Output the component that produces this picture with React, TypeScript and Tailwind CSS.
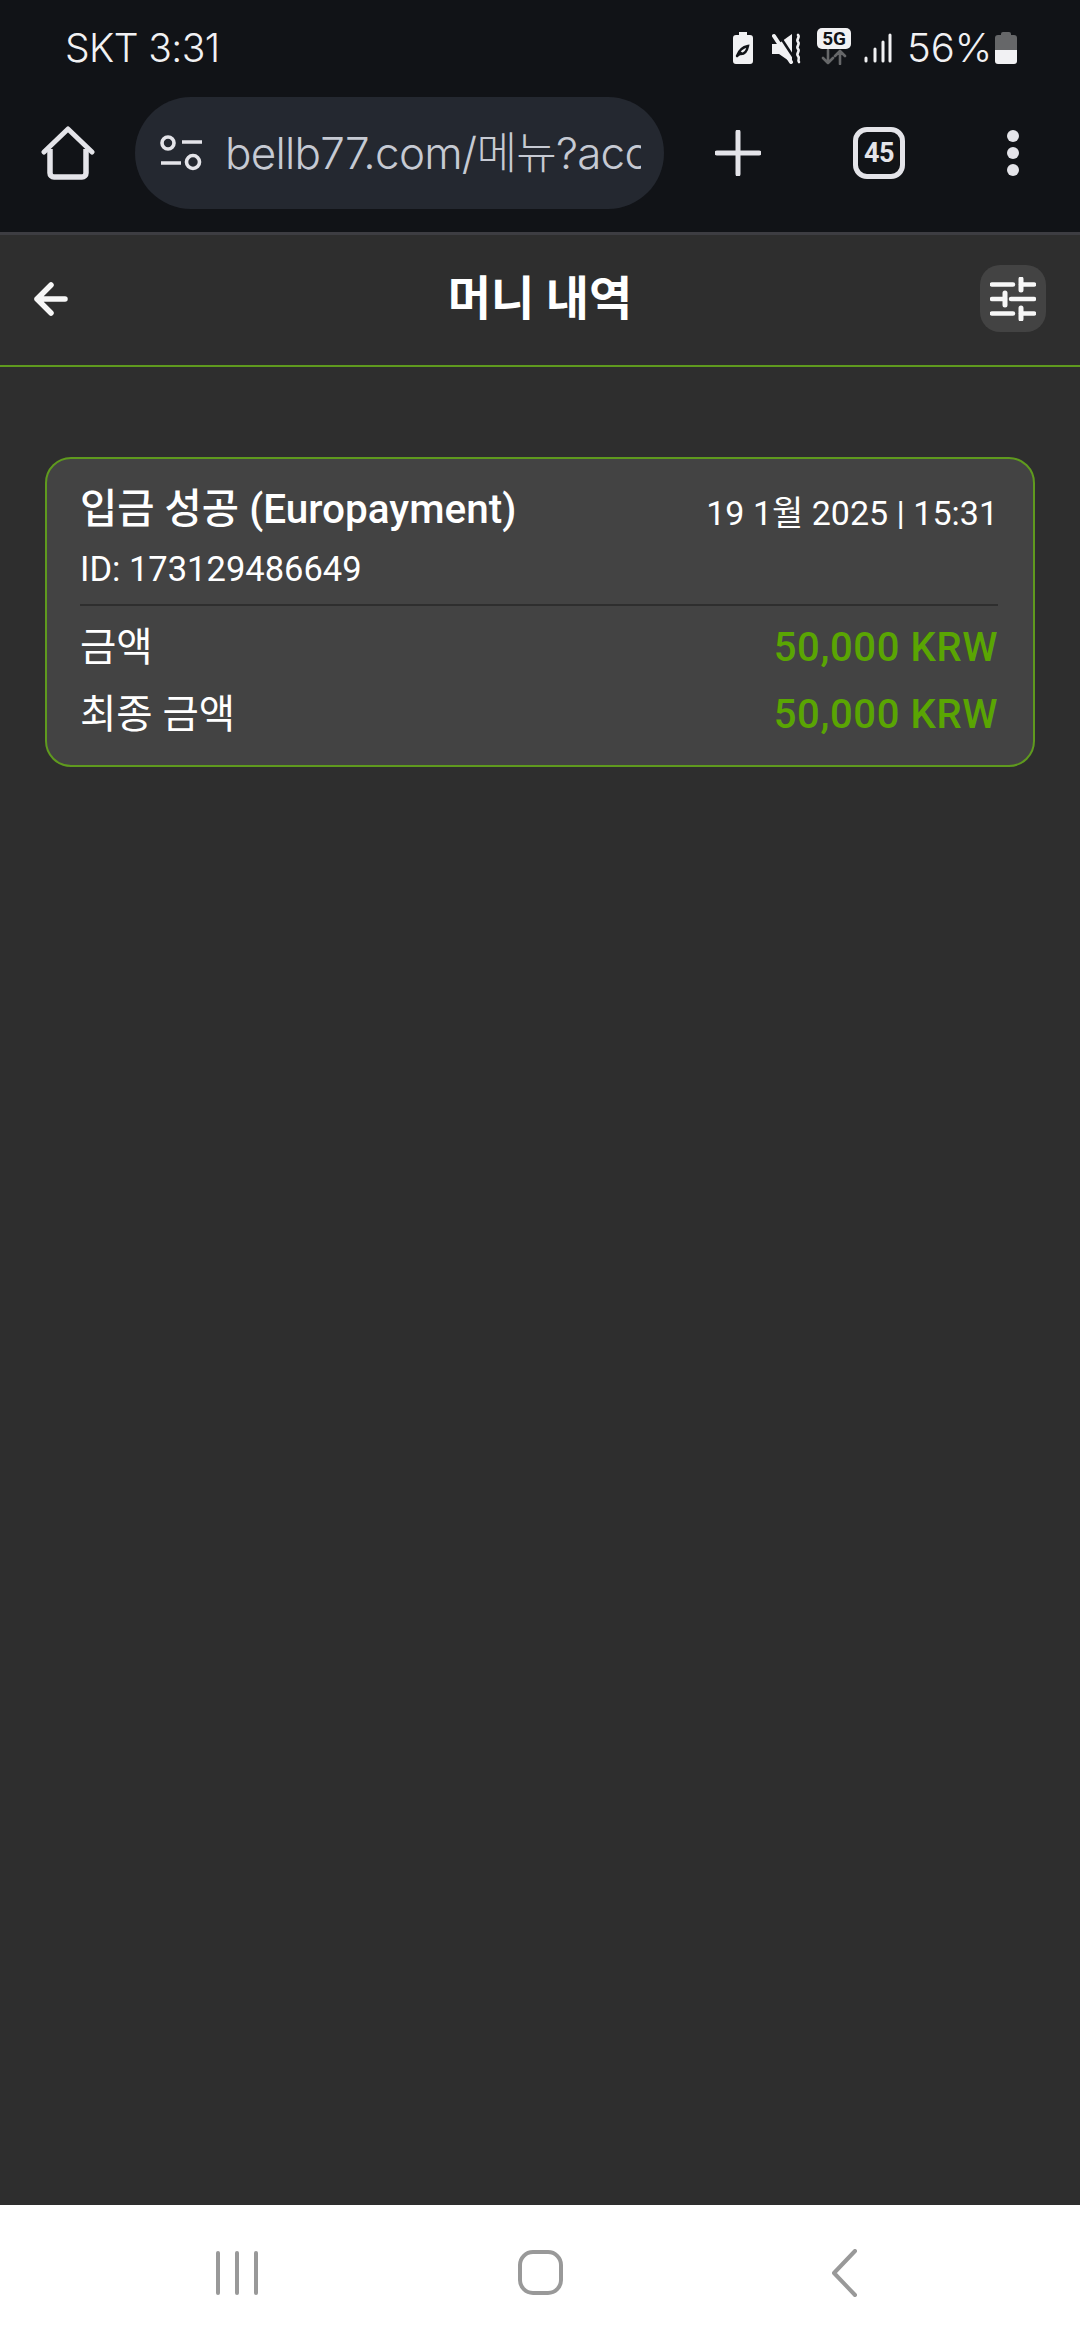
import React from "react";

const roboto = "font-['Roboto','Noto_Sans_CJK_KR',sans-serif]";

function StatusIcons() {
  return (
    <div className="flex items-start">
      <svg width="22" height="32" viewBox="0 0 22 32" className="mt-[32px]">
        <path d="M7 0h8v3h3a3 3 0 0 1 3 3v23a3 3 0 0 1-3 3H4a3 3 0 0 1-3-3V6a3 3 0 0 1 3-3h3z" fill="#f1f1f3" />
        <path d="M5 24c2-6 6-9 11-10-1 5-3 8-7 8M5 24l4-3" fill="none" stroke="#111317" strokeWidth="2.4" strokeLinecap="round" />
      </svg>
      <svg width="30" height="31" viewBox="0 0 30 31" className="mt-[33px] ml-[18px]">
        <path d="M0 11h6L20 1v29L7 21H0z" fill="#f1f1f3" />
        <path d="M7 2l17 26" stroke="#111317" strokeWidth="2.5" />
        <path d="M2 3l17 26" stroke="#f1f1f3" strokeWidth="4" strokeLinecap="round" />
        <path d="M26 2c2.500 2.500-2.500 4.500 0 7s-2.500 4.500 0 7-2.500 4.500 0 7 -1 4 1 6" fill="none" stroke="#f1f1f3" strokeWidth="2.600" strokeLinecap="round" />
      </svg>
      <div className="mt-[28px] ml-[15px] flex w-[34px] flex-col items-center">
        <div className={`flex h-[21px] w-[34px] items-center justify-center rounded-[5px] bg-[#f1f1f3] text-[19px] leading-none font-bold tracking-[-0.3px] text-[#111317] ${roboto}`}>5G</div>
        <svg width="26" height="16" viewBox="0 0 26 16">
          <path d="M7 1v13M2 9l5 5 5-5M19 15V2M14 7l5-5 5 5" fill="none" stroke="#666769" strokeWidth="2.6" strokeLinecap="round" strokeLinejoin="round" />
        </svg>
      </div>
      <svg width="28" height="30" viewBox="0 0 28 30" className="mt-[33px] ml-[13px]">
        <path d="M2 25v3M11 16v12M19 9v19M26 2v26" stroke="#f1f1f3" strokeWidth="3" strokeLinecap="round" />
      </svg>
      <span className="mt-[24px] ml-[15px] w-[81px] font-['Inter',sans-serif] text-[40px] leading-[47px] font-light text-[#f1f1f3]">56%</span>
      <div className="mt-[32px] ml-[7px] flex h-[32px] w-[22px] flex-col items-center">
        <div className="h-[3px] w-[10px] rounded-t-[2px] bg-[#666769]" />
        <div className="h-[15px] w-[22px] rounded-t-[3px] bg-[#666769]" />
        <div className="h-[14px] w-[22px] rounded-b-[3px] bg-[#f1f1f3]" />
      </div>
    </div>
  );
}

function BrowserBar() {
  return (
    <div className="flex h-[112px] items-center">
      <svg width="54" height="54" viewBox="0 0 54 54" className="ml-[41px]">
        <path d="M3 26 27 3l24 23" fill="none" stroke="#e4e4e9" strokeWidth="5" strokeLinecap="round" strokeLinejoin="round" />
        <path d="M9 23v24a4 4 0 0 0 4 4h28a4 4 0 0 0 4-4V23" fill="none" stroke="#e4e4e9" strokeWidth="5.5" strokeLinejoin="round" />
      </svg>
      <div className="ml-[40px] flex h-[112px] w-[529px] items-center rounded-full bg-[#242830] pr-[23px] pl-[24px]">
        <svg width="44" height="36" viewBox="0 0 44 36" className="shrink-0">
          <circle cx="9" cy="8" r="6" fill="none" stroke="#e4e4e9" strokeWidth="3.6" />
          <path d="M23 7h20M2 28h20" stroke="#e4e4e9" strokeWidth="3.6" />
          <circle cx="34" cy="27" r="6.5" fill="none" stroke="#e4e4e9" strokeWidth="3.6" />
        </svg>
        <div className="ml-[22px] overflow-hidden font-['Inter','Noto_Sans_CJK_KR',sans-serif] text-[44px] leading-[56px] font-light tracking-[-0.75px] whitespace-nowrap text-[#c6cad3]">
          bellb77.com/메뉴?account
        </div>
      </div>
      <svg width="46" height="46" viewBox="0 0 46 46" className="ml-[51px]">
        <path d="M23 2v42M2 23h42" stroke="#e4e4e9" strokeWidth="5" strokeLinecap="round" />
      </svg>
      <div className={`ml-[92px] flex h-[52px] w-[52px] items-center justify-center rounded-[14px] border-[5px] border-[#e4e4e9] text-[27px] leading-none font-bold tracking-[-0.5px] text-[#e4e4e9] ${roboto}`}>
        45
      </div>
      <div className="ml-[102px] flex flex-col gap-[5px]">
        <div className="h-[12px] w-[12px] rounded-full bg-[#e4e4e9]" />
        <div className="h-[12px] w-[12px] rounded-full bg-[#e4e4e9]" />
        <div className="h-[12px] w-[12px] rounded-full bg-[#e4e4e9]" />
      </div>
    </div>
  );
}

function Row({ label, value }: { label: string; value: string }) {
  return (
    <div className="flex h-[67px] items-center justify-between">
      <span className="text-[39.5px] text-white">{label}</span>
      <span className="text-[40px] font-medium tracking-[0.6px] text-[#5aa503]">{value}</span>
    </div>
  );
}

export default function App() {
  return (
    <div className={`flex h-[2340px] w-[1080px] flex-col overflow-hidden bg-[#2e2e2e] ${roboto}`}>
      <header className="h-[232px] bg-[#111317]">
        <div className="flex h-[97px] justify-between pr-[63px] pl-[65px]">
          <span className="mt-[24px] font-['Inter',sans-serif] text-[39px] leading-[47px] font-light tracking-[-0.6px] text-[#f1f1f3]">SKT 3:31</span>
          <StatusIcons />
        </div>
        <BrowserBar />
      </header>
      <div className="h-[3px] bg-[#3d3d42]" />

      <div className="flex h-[132px] items-center justify-between border-b-2 border-[#5f9a1e] pr-[34px] pb-[3px] pl-[34px]">
        <div className="w-[66px]">
          <svg width="34" height="34" viewBox="0 0 34 34">
            <path d="M31 17H3M17 3 3 17l14 14" fill="none" stroke="#f7f7f7" strokeWidth="5.500" strokeLinecap="round" strokeLinejoin="round" />
          </svg>
        </div>
        <h1 className="text-[47px] leading-[60px] font-bold text-white">머니 내역</h1>
        <div className="flex h-[67px] w-[66px] items-center justify-center rounded-[20px] bg-[#434343]">
          <svg width="46" height="44" viewBox="0 0 46 44">
            <path d="M2 7.500h21M31 7.500h13M2 22h13M21 22h23M2 36.500h21M31 36.500h13" stroke="#f7f7f7" strokeWidth="4.500" strokeLinecap="round" />
            <path d="M31 2v11M15 16v12M31 31v11" stroke="#f7f7f7" strokeWidth="5" strokeLinecap="round" />
          </svg>
        </div>
      </div>

      <main className="flex-1 px-[45px] pt-[90px]">
        <section className="h-[310px] rounded-[26px] border-2 border-[#5f9a1e] bg-[#434343] pt-[16px] pr-[35px] pl-[33px]">
          <div className="flex h-[68px] items-center justify-between">
            <span className="text-[40.500px] font-medium text-white">입금 성공 (Europayment)</span>
            <span className="pt-[8px] text-[34px] text-white">19 1월 2025 | 15:31</span>
          </div>
          <div className="flex h-[61px] items-center pb-[8px] text-[34.500px] text-white">ID: 173129486649</div>
          <div className="h-[2px] bg-[#2e2e2e]" />
          <div className="pt-[8px]">
            <Row label="금액" value="50,000 KRW" />
            <Row label="최종 금액" value="50,000 KRW" />
          </div>
        </section>
      </main>

      <nav className="flex h-[135px] items-center bg-white">
        <div className="ml-[216px] flex h-[44px] w-[42px] justify-between">
          <div className="h-full w-[4px] rounded-full bg-[#999999]" />
          <div className="h-full w-[4px] rounded-full bg-[#999999]" />
          <div className="h-full w-[4px] rounded-full bg-[#999999]" />
        </div>
        <div className="ml-[260px] h-[45px] w-[45px] rounded-[15px] border-[4.500px] border-[#999999]" />
        <svg width="28" height="48" viewBox="0 0 28 48" className="ml-[267px]">
          <path d="M25 2 4 24l21 22" fill="none" stroke="#999999" strokeWidth="4" strokeLinecap="round" strokeLinejoin="round" />
        </svg>
      </nav>
    </div>
  );
}
